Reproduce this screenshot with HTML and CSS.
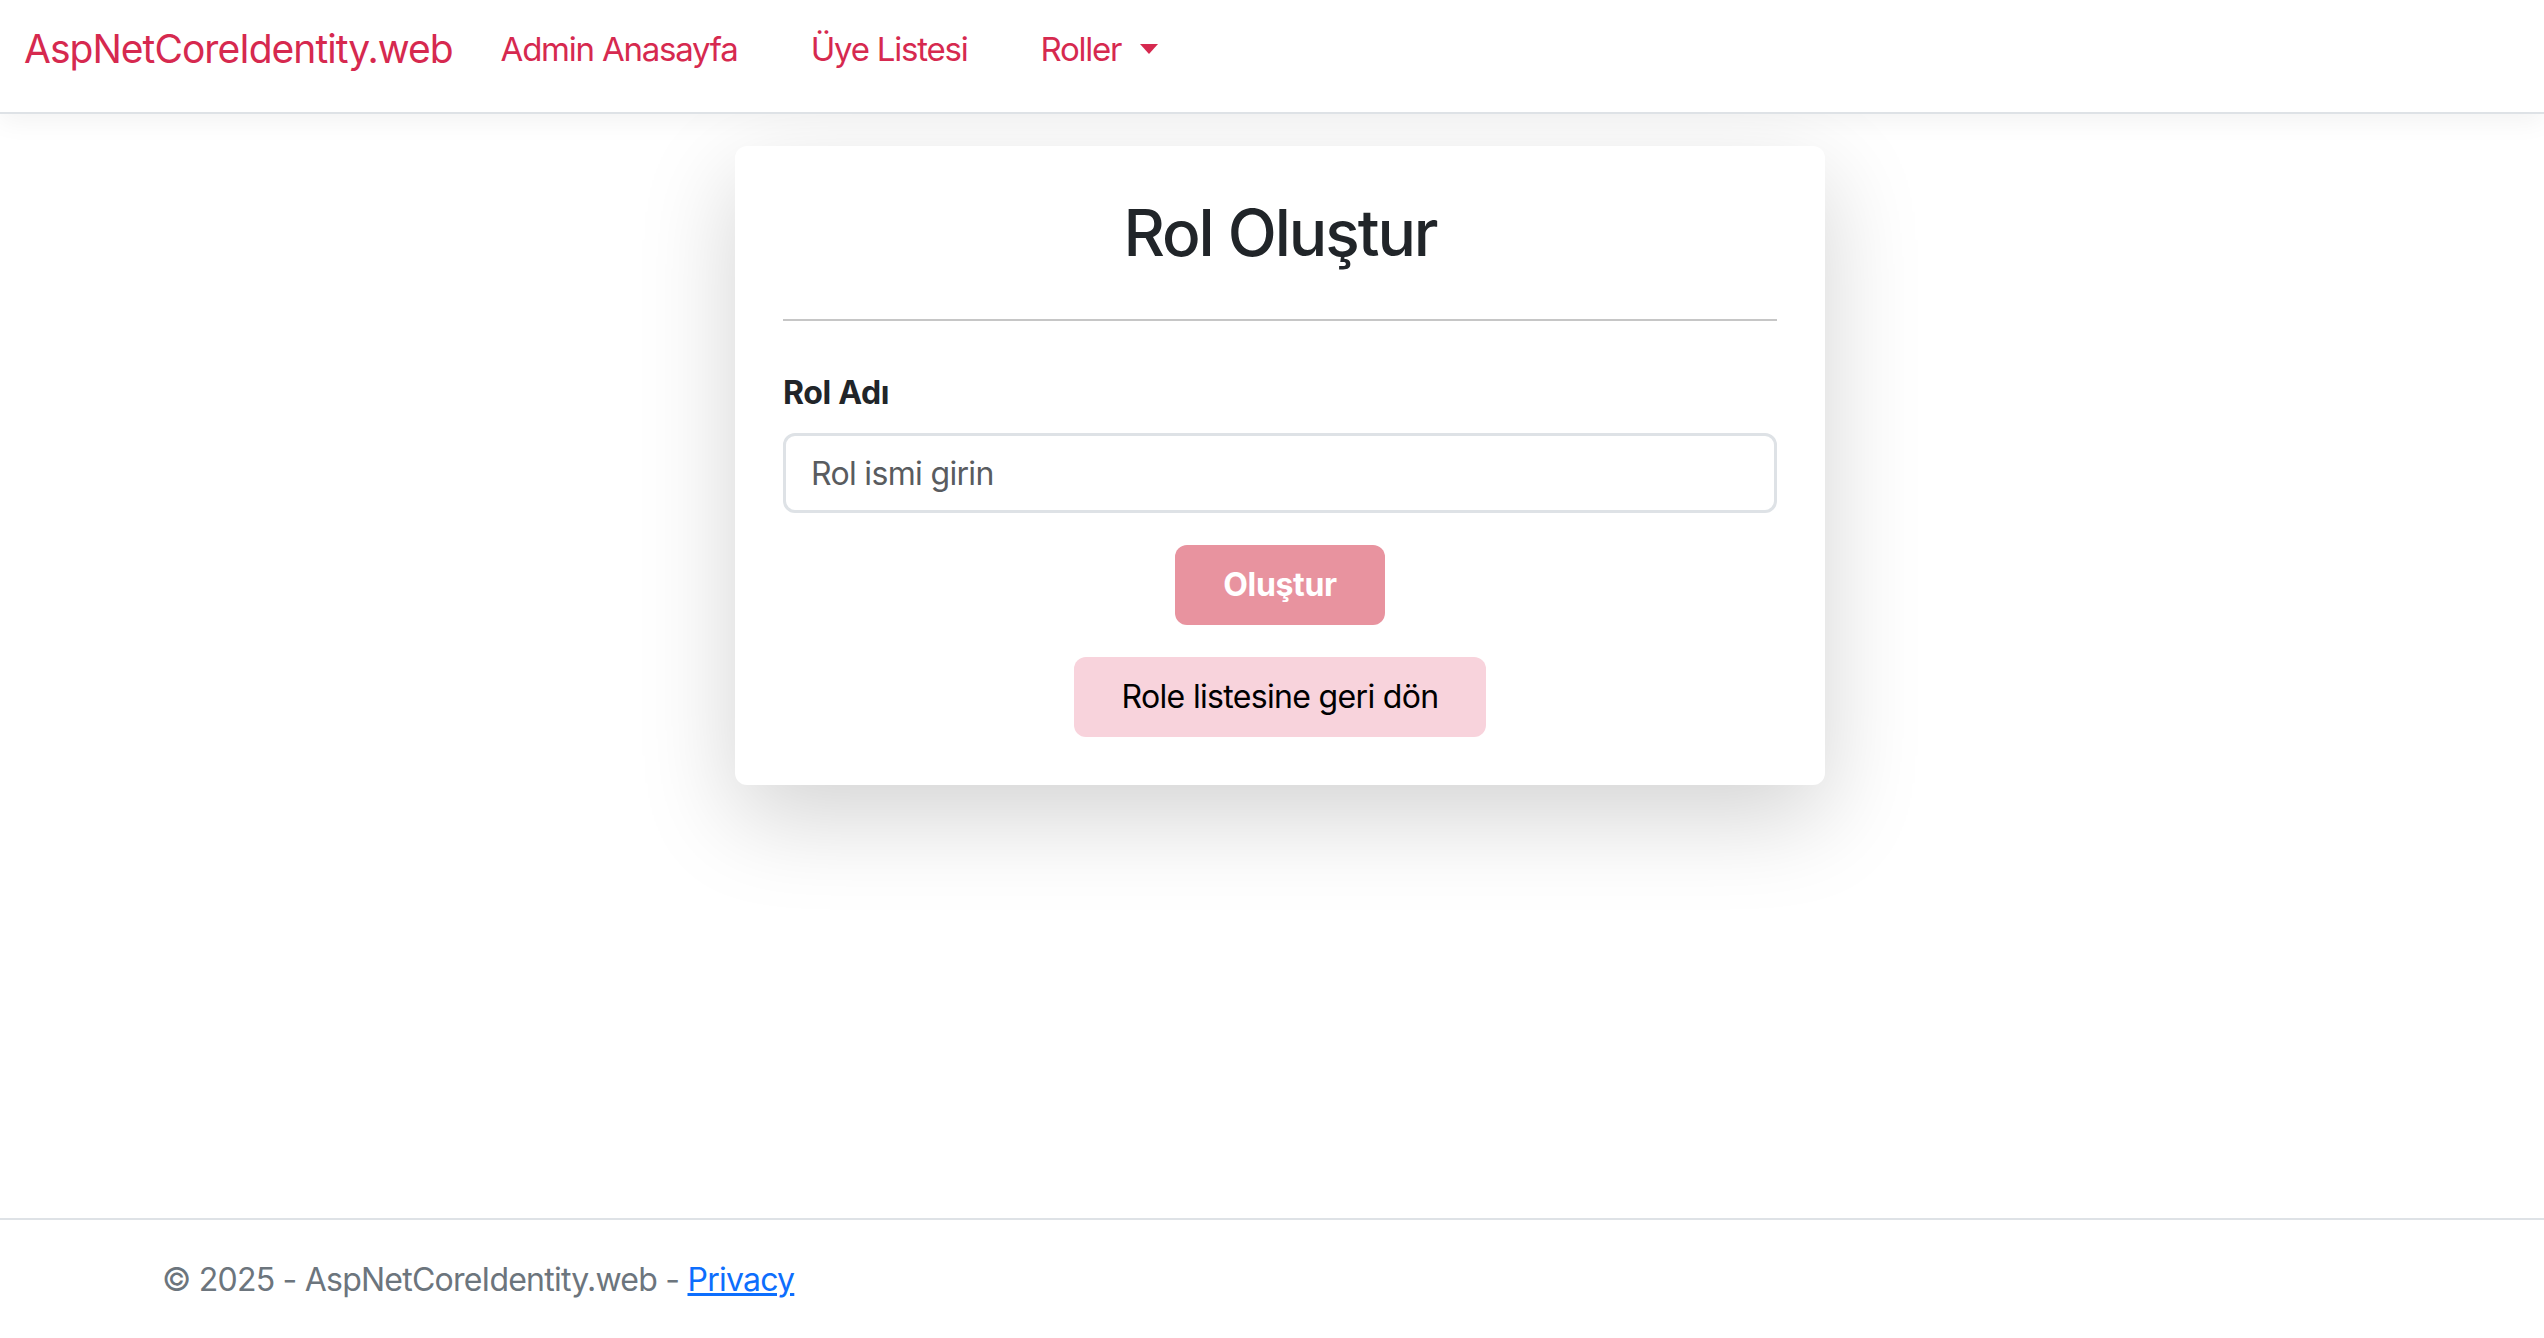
FILE: index.html
```html
<!DOCTYPE html>
<html lang="tr">
<head>
<meta charset="utf-8">
<title>Rol Oluştur - AspNetCoreIdentity.web</title>
<link rel="stylesheet" href="styles.css">
</head>
<body>
<header class="navbar">
  <a class="brand" href="#">AspNetCoreIdentity.web</a>
  <ul class="nav">
    <li><a class="nav-link" href="#">Admin Anasayfa</a></li>
    <li><a class="nav-link" href="#">Üye Listesi</a></li>
    <li><a class="nav-link dropdown" href="#">Roller<span class="caret"></span></a></li>
  </ul>
</header>
<main class="page">
  <section class="card">
    <h2 class="card-title">Rol Oluştur</h2>
    <hr class="divider">
    <form class="form">
      <label class="label" for="roleName">Rol Adı</label>
      <input class="input" id="roleName" type="text" placeholder="Rol ismi girin">
      <div class="actions">
        <button class="btn btn-primary" type="button">Oluştur</button>
        <a class="btn btn-light" href="#">Role listesine geri dön</a>
      </div>
    </form>
  </section>
</main>
<footer class="footer">
  <div class="footer-inner">© 2025 - AspNetCoreIdentity.web - <a class="footer-link" href="#">Privacy</a></div>
</footer>
</body>
</html>
```
FILE: styles.css
```css
* { box-sizing: border-box; }
html, body { margin: 0; padding: 0; }
body {
  font-family: Inter, "Noto Sans", "Liberation Sans", sans-serif;
  color: #212529;
  background: #fff;
  min-height: 100vh;
  display: flex;
  flex-direction: column;
  letter-spacing: -0.021em;
}
.navbar {
  height: 114px;
  display: flex;
  align-items: center;
  padding: 0 24px 14px 24px;
  background: #fff;
  border-bottom: 2px solid #dee2e6;
  box-shadow: 0 8px 24px rgba(0,0,0,0.05);
  position: relative;
  z-index: 2;
}
.brand {
  color: #d6294f;
  font-size: 39px;
  letter-spacing: -0.025em;
  line-height: 60px;
  text-decoration: none;
  margin-right: 48px;
}
.nav {
  list-style: none;
  margin: 0;
  padding: 0;
  display: flex;
  gap: 73px;
}
.nav-link {
  color: #d6294f;
  font-size: 33px;
  letter-spacing: -0.037em;
  line-height: 52px;
  text-decoration: none;
  display: flex;
  align-items: center;
}
.caret {
  display: inline-block;
  width: 0;
  height: 0;
  margin-left: 19px;
  border-top: 10px solid #d6294f;
  border-left: 9px solid transparent;
  border-right: 9px solid transparent;
}
.page {
  flex: 1;
  display: flex;
  justify-content: center;
  align-items: flex-start;
  padding: 32px 0 0 16px;
}
.card {
  width: 1090px;
  background: #fff;
  border-radius: 12px;
  padding: 48px;
  box-shadow: 0 32px 96px rgba(0,0,0,0.175);
}
.card-title {
  margin: 0;
  text-align: center;
  font-size: 64px;
  letter-spacing: -0.032em;
  line-height: 77px;
  font-weight: 500;
  color: #212529;
}
.divider {
  margin: 48px 0 47px 0;
  border: 0;
  border-top: 2px solid #c6c6c6;
  height: 0;
}
.form { display: flex; flex-direction: column; }
.label {
  font-size: 32px;
  line-height: 48px;
  font-weight: 700;
  margin-top: 1px;
  margin-bottom: 16px;
}
.input {
  width: 100%;
  height: 80px;
  border: 3px solid #dee2e6;
  border-radius: 12px;
  padding: 0 25px;
  font-family: inherit;
  font-size: 32px;
  letter-spacing: -0.021em;
  color: #212529;
  outline: none;
}
.input::placeholder { color: #595c5f; }
.actions {
  margin-top: 32px;
  display: flex;
  flex-direction: column;
  align-items: center;
  gap: 32px;
}
.btn {
  height: 80px;
  padding: 0 48px;
  border: 0;
  border-radius: 12px;
  font-family: inherit;
  font-size: 32px;
  letter-spacing: -0.021em;
  line-height: 80px;
  text-decoration: none;
  display: inline-block;
}
.btn-primary {
  background: #e8939f;
  color: #fff;
  font-weight: 700;
  letter-spacing: -0.01em;
}
.btn-light {
  background: #f8d3dc;
  color: #000;
}
.footer {
  height: 120px;
  border-top: 2px solid #dee2e6;
  display: flex;
  align-items: center;
  padding-left: 162px;
  font-size: 32px;
  letter-spacing: -0.024em;
  color: #6c757d;
}
.footer-link { color: #0d6efd; }
```
